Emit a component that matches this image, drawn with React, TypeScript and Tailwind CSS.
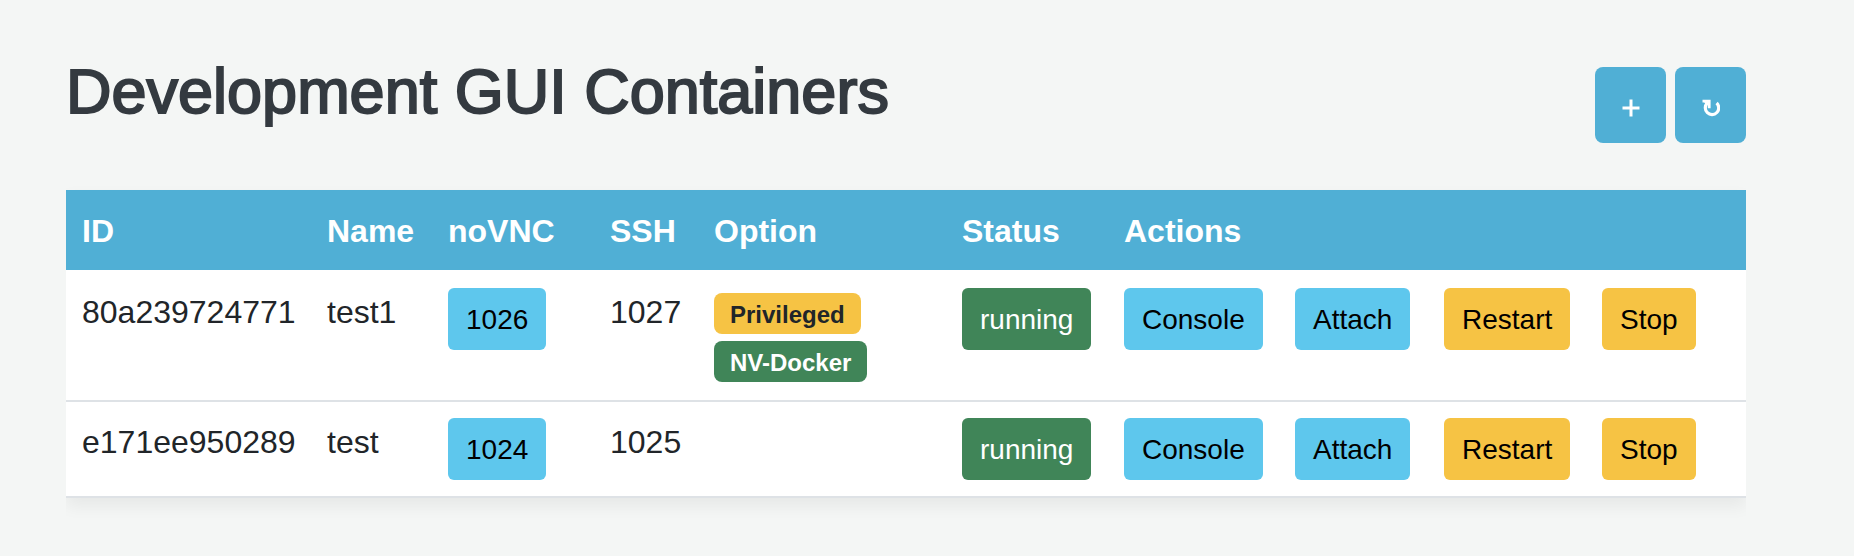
import type { ReactNode } from "react";

type Container = {
  id: string;
  name: string;
  vnc: string;
  ssh: string;
  options: ("Privileged" | "NV-Docker")[];
};

const containers: Container[] = [
  { id: "80a239724771", name: "test1", vnc: "1026", ssh: "1027", options: ["Privileged", "NV-Docker"] },
  { id: "e171ee950289", name: "test", vnc: "1024", ssh: "1025", options: [] },
];

const tones = {
  info: "bg-[#5ec7ed] text-black",
  warning: "bg-[#f6c344] text-black",
  success: "bg-[#408558] text-white",
};

const badgeTones = {
  Privileged: "bg-[#f6c344] text-[#212529]",
  "NV-Docker": "bg-[#408558] text-white",
};

function SmallButton({ tone, children }: { tone: keyof typeof tones; children: ReactNode }) {
  return (
    <button type="button" className={`block rounded-md px-[18px] pt-[11px] pb-[9px] text-[28px] leading-[42px] whitespace-nowrap ${tones[tone]}`}>
      {children}
    </button>
  );
}

function ToolButton({ label, children }: { label: string; children: ReactNode }) {
  return (
    <button type="button" aria-label={label} className="flex h-[76px] w-[71px] items-center justify-center rounded-lg bg-[#50afd5] pt-[6px] text-white">
      {children}
    </button>
  );
}

export default function App() {
  return (
    <main className="min-h-screen bg-[#f4f6f5] pt-[67px] pr-[108px] pb-[58px] pl-[66px] font-['Liberation_Sans',Arial,sans-serif] text-[32px] leading-[48px] text-[#212529]">
      <header className="flex h-[123px] items-start justify-between">
        <h1 className="text-[63px] leading-[48px] text-[#343a40] [-webkit-text-stroke:2px_#343a40]">Development GUI Containers</h1>
        <div className="flex gap-[9px]">
          <ToolButton label="Add container">
            <svg width="18" height="18" viewBox="0 0 18 18" fill="none" stroke="currentColor" strokeWidth="3">
              <path d="M9 .5v17M.5 9h17" />
            </svg>
          </ToolButton>
          <ToolButton label="Refresh">
            <svg width="18" height="18" viewBox="0 0 18 18" fill="none">
              <path d="M5.2 4.2A6.7 6.7 0 1 0 14.6 4" stroke="currentColor" strokeWidth="3.2" />
              <path d="M.5 .8h8.1v8.4H5.8V5L4.6 6.2 2.2 3.4H.5z" fill="currentColor" />
            </svg>
          </ToolButton>
        </div>
      </header>

      <div className="overflow-x-clip">
        <table className="w-full table-fixed border-separate border-spacing-0 bg-white text-left shadow-[0_8px_16px_rgba(0,0,0,0.06)]">
          <colgroup>
            <col className="w-[245px]" />
            <col className="w-[121px]" />
            <col className="w-[162px]" />
            <col className="w-[104px]" />
            <col className="w-[248px]" />
            <col className="w-[162px]" />
            <col className="w-[171px]" />
            <col className="w-[149px]" />
            <col className="w-[158px]" />
            <col />
          </colgroup>
          <thead className="bg-[#50afd5] text-white">
            <tr className="[&>th]:px-4 [&>th]:pt-[17px] [&>th]:pb-[15px] [&>th]:font-bold">
              <th>ID</th>
              <th>Name</th>
              <th>noVNC</th>
              <th>SSH</th>
              <th>Option</th>
              <th>Status</th>
              <th colSpan={4}>Actions</th>
            </tr>
          </thead>
          <tbody>
            {containers.map((c) => (
              <tr
                key={c.id}
                className="[&>td]:border-b-2 [&>td]:border-[#dee2e6] [&>td]:p-4 [&>td]:align-top first:[&>td]:pt-[18px]"
              >
                <td>{c.id}</td>
                <td>{c.name}</td>
                <td><SmallButton tone="info">{c.vnc}</SmallButton></td>
                <td>{c.ssh}</td>
                <td>
                  {c.options.length > 0 && (
                    <div className="flex flex-col items-start gap-[7px] pt-[5px] pb-[2px]">
                      {c.options.map((o) => (
                        <span key={o} className={`rounded-lg px-4 pt-[9px] pb-[7px] text-2xl leading-[25px] font-bold ${badgeTones[o]}`}>{o}</span>
                      ))}
                    </div>
                  )}
                </td>
                <td><SmallButton tone="success">running</SmallButton></td>
                <td><SmallButton tone="info">Console</SmallButton></td>
                <td><SmallButton tone="info">Attach</SmallButton></td>
                <td><SmallButton tone="warning">Restart</SmallButton></td>
                <td><SmallButton tone="warning">Stop</SmallButton></td>
              </tr>
            ))}
          </tbody>
        </table>
      </div>
    </main>
  );
}
